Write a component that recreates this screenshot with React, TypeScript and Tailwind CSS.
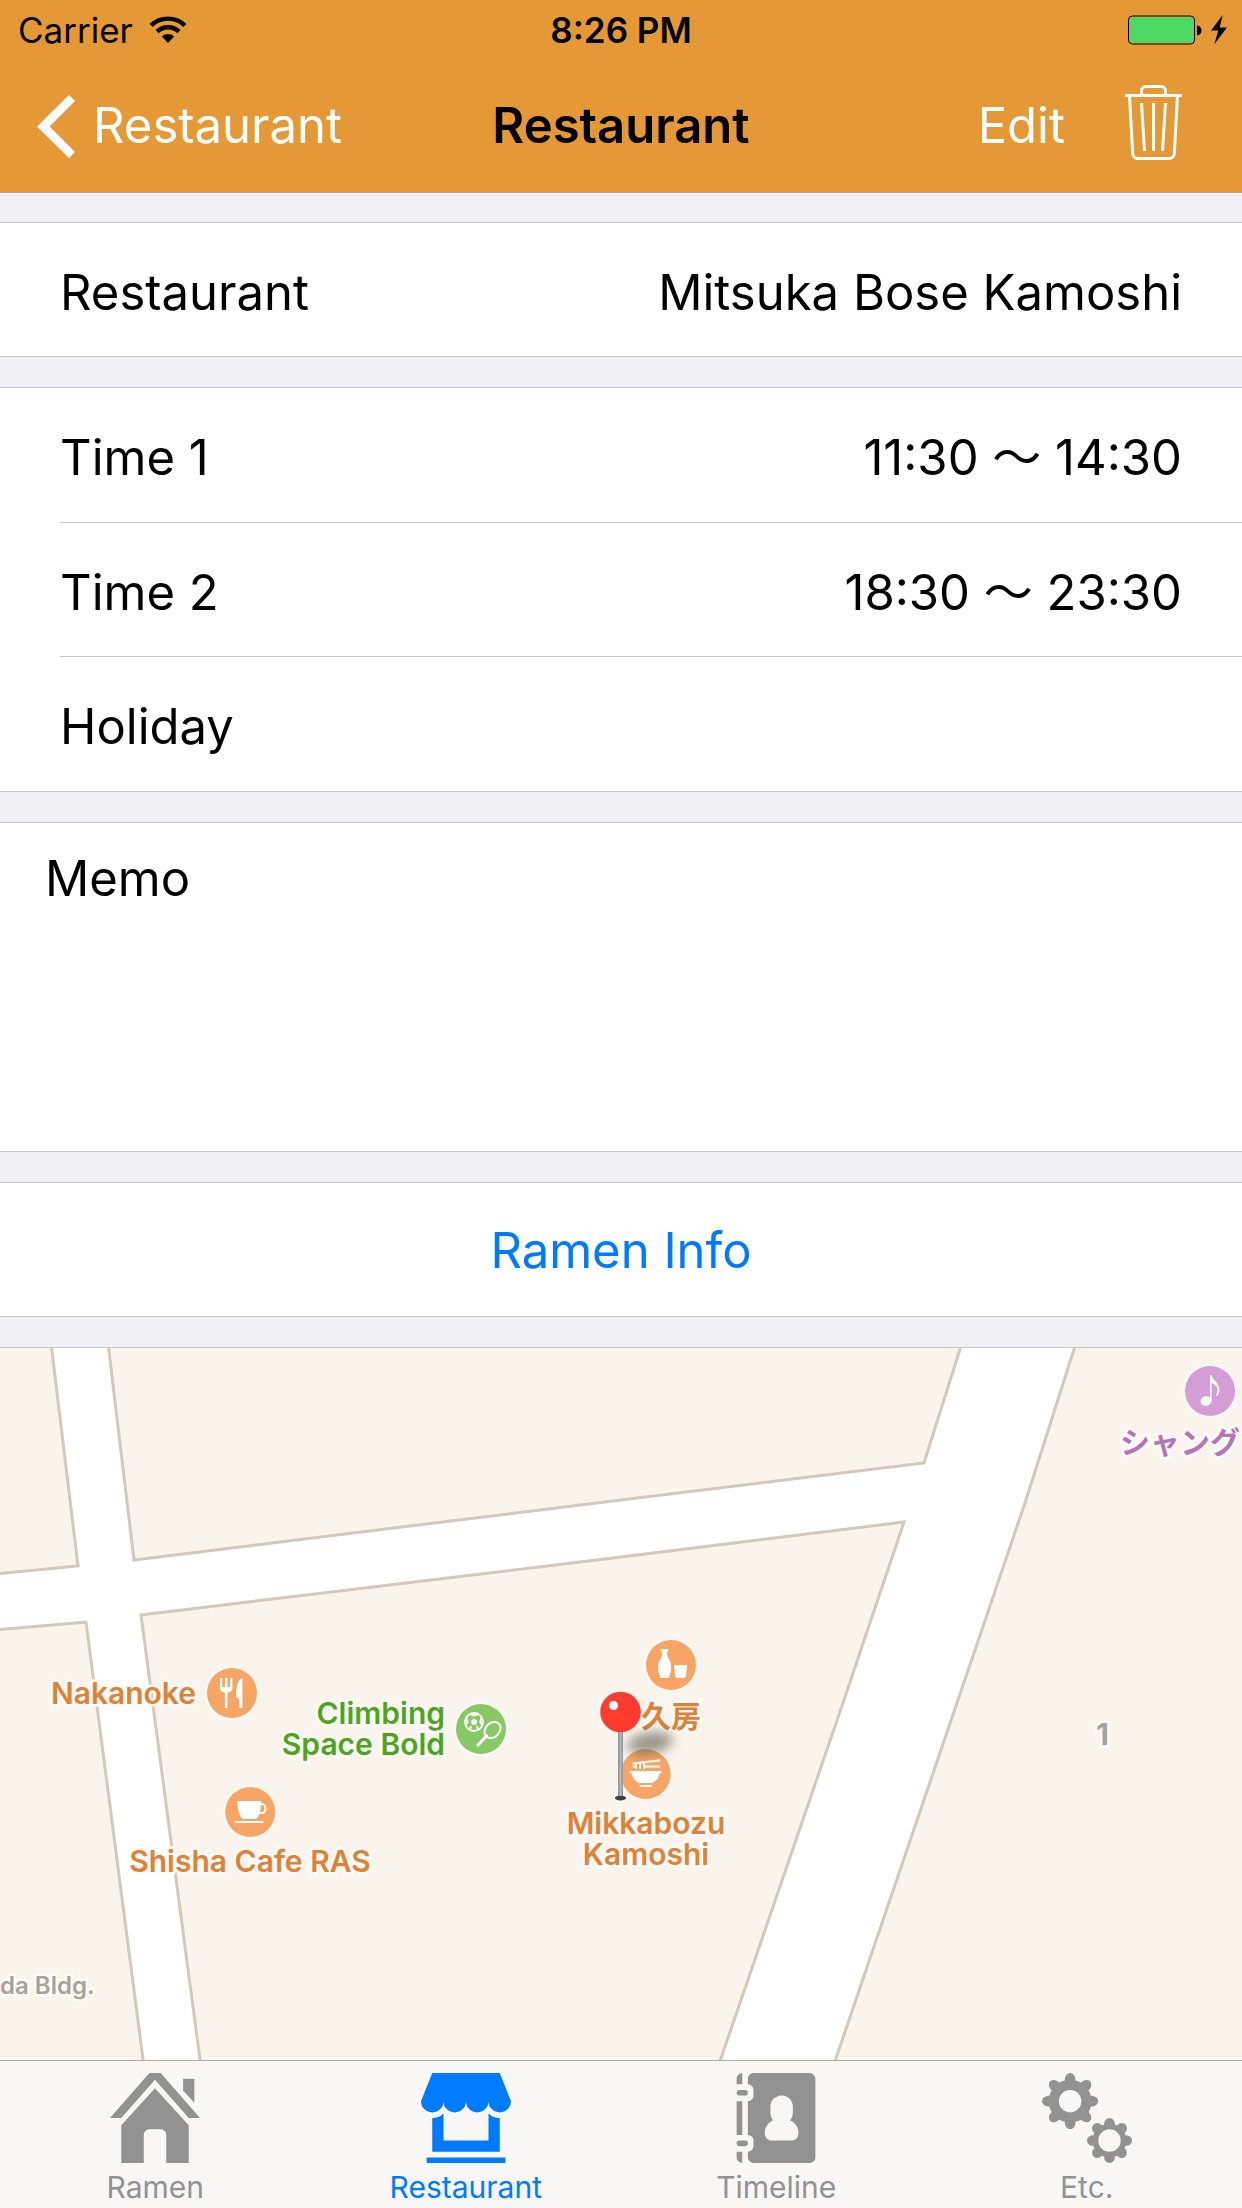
import type { ReactNode } from 'react'

type Row = { label: string; value?: string }

const nameRows: Row[] = [{ label: 'Restaurant', value: 'Mitsuka Bose Kamoshi' }]

const timeRows: Row[] = [
  { label: 'Time 1', value: '11:30 〜 14:30' },
  { label: 'Time 2', value: '18:30 〜 23:30' },
  { label: 'Holiday' },
]

function WifiIcon() {
  return (
    <svg viewBox="0 0 38 28" className="h-7 w-[38px]" fill="none" stroke="currentColor" aria-hidden="true">
      <path d="M2.1 9.5a24.3 24.3 0 0 1 33.8 0" strokeWidth="4.4" />
      <path d="M8.1 15.7a15.7 15.7 0 0 1 21.8 0" strokeWidth="4.6" />
      <path d="M19 27l-6.2-6.5a9 9 0 0 1 12.4 0z" fill="currentColor" stroke="none" />
    </svg>
  )
}

function BatteryIcon() {
  return (
    <svg viewBox="0 0 100 30" className="h-[30px] w-[100px]" aria-hidden="true">
      <rect x="0.5" y="1" width="66" height="28" rx="4" fill="none" stroke="#000" />
      <rect x="1.6" y="2.2" width="63.8" height="25.6" rx="3" fill="#4cd964" />
      <path d="M69 10.5a4.5 5 0 0 1 0 10z" fill="#000" />
      <path d="M94.7 0L83 15.6h7.3L86.3 29.3 99 12.6h-7.3z" fill="#000" />
    </svg>
  )
}

function BackIcon() {
  return (
    <svg viewBox="0 0 38 63" className="h-[63px] w-[38px]" fill="currentColor" aria-hidden="true">
      <path d="M32 0l6 6-25.5 25.5L38 57l-6 6L0 31.5z" />
    </svg>
  )
}

function TrashIcon() {
  return (
    <svg viewBox="0 0 57 75" className="h-[75px] w-[57px]" fill="none" stroke="currentColor" strokeWidth="3" aria-hidden="true">
      <path d="M0 10.5h57" />
      <path d="M16.5 10V6a4.5 4.5 0 0 1 4.5-4.5h15A4.5 4.5 0 0 1 40.5 6v4" />
      <path d="M4.5 11l3.2 57.5a5 5 0 0 0 5 5h31.6a5 5 0 0 0 5-5L52.5 11" />
      <path d="M16.5 18l3 48M28.5 18v48M40.5 18l-3 48" />
    </svg>
  )
}

function Header() {
  return (
    <header className="relative bg-[#e59936] shadow-[0_1px_0_#a7a6a9]">
      <div className="grid h-[60px] grid-cols-[1fr_auto_1fr] items-center text-[35px]">
        <div className="flex items-center gap-4 pl-[18px]">
          <span>Carrier</span>
          <WifiIcon />
        </div>
        <span className="font-semibold">8:26 PM</span>
        <div className="flex justify-end pr-[14px]">
          <BatteryIcon />
        </div>
      </div>
      <nav className="grid h-[132px] grid-cols-[1fr_auto_1fr] items-center">
        <button type="button" className="flex items-center gap-[18px] pl-[37px] text-white">
          <BackIcon />
          Restaurant
        </button>
        <h1 className="font-semibold">Restaurant</h1>
        <div className="flex items-center justify-end gap-[60px] pr-[60px] text-white">
          <button type="button">Edit</button>
          <button type="button" aria-label="Delete restaurant" className="-mt-2">
            <TrashIcon />
          </button>
        </div>
      </nav>
    </header>
  )
}

function RowGroup({ rows, className }: { rows: Row[]; className: string }) {
  return (
    <dl className={`flex flex-col border-y border-[#c8c7cc] bg-white ${className}`}>
      {rows.map((row) => (
        <div
          key={row.label}
          className="ml-[60px] flex flex-1 items-center justify-between border-b border-[#c8c7cc] pt-1.5 pr-[60px] last:border-b-0"
        >
          <dt>{row.label}</dt>
          <dd>{row.value}</dd>
        </div>
      ))}
    </dl>
  )
}

/* ---------- Map ---------- */

function Roads() {
  return (
    <svg viewBox="0 0 1242 712" className="h-[712px] w-[1242px]" aria-hidden="true">
      <rect width="1242" height="712" fill="#fff" />
      <g fill="#f9f5ed" stroke="#d2c8bc" strokeWidth="3">
        <path d="M-5 226L78 218 51-5H-5z" />
        <path d="M108-5l26 217 487-60 303-37 38-120z" />
        <path d="M-5 282L86 274l58 445H-5z" />
        <path d="M141 267l480-58 283-35-60 178-126 367H201z" />
        <path d="M1076-5l-51 160-67 197-125 367h415V-5z" />
      </g>
    </svg>
  )
}

function ForkKnife() {
  return (
    <g fill="#fff">
      <path d="M13 10h2.2v9h2.7v-9h2.5v9h2.7v-9h2.3v10.5c0 2-1.7 3.5-5 4.3V40h-2.5V24.8c-3.2-.8-4.9-2.3-4.9-4.3z" />
      <path d="M35.4 10v30h-3.2v-9l-2.7-1.2c-1-8 .3-17.8 5.9-19.8z" />
    </g>
  )
}

function TeaCup() {
  return (
    <g fill="#fff">
      <path d="M12.2 14H36c0 8-1.5 14-5 18H17.5c-3.8-4-5.3-10-5.3-18z" />
      <path d="M35 17h2a3.2 4.5 0 0 1 0 9h-3.5" fill="none" stroke="#fff" strokeWidth="2" />
      <path d="M9 34h30l-1.5 2h-27z" />
    </g>
  )
}

function SportsGear() {
  return (
    <g fill="none" stroke="#fff">
      <circle cx="18" cy="18" r="9" strokeWidth="1.8" />
      <path d="M18 14.5l3.3 2.4-1.3 3.9h-4l-1.3-3.9z" fill="#fff" stroke="none" />
      <path d="M14 10l4 1.5 4-1.5M25.5 14l-1.2 4 2 3M22 25.5l-1-3.5M14 25.5l1-3.5M10.5 14l1.2 4-2 3" strokeWidth="2" />
      <ellipse cx="36.5" cy="26" rx="9" ry="7" strokeWidth="2" transform="rotate(-45 36.5 26)" />
      <path d="M30.5 32L22 41" strokeWidth="3.2" strokeLinecap="round" />
    </g>
  )
}

function Sake() {
  return (
    <g fill="#fff">
      <path d="M14.3 9h8.4l-1.5 3.5v3c1 3 4 6 4 11.5 0 4-.7 7-1.7 9l-.5 2h-8.5l-.7-2c-1-2-1.7-5-1.7-9 0-5.500 3-8.500 4-11.500v-3z" />
      <path d="M28 25h13l-1 11-1.2 2h-8.600L29 36z" />
    </g>
  )
}

function NoodleBowl() {
  return (
    <g fill="none" stroke="#fff">
      <path d="M12 14.5l27.5-3.2M24 17.5h15.5M12 17.5h2.5" strokeWidth="2.2" />
      <path d="M15.5 14v6M19.5 14v6M23.5 13v7" strokeWidth="1.6" />
      <path d="M9 22h32v2h-1.7c-.8 4.5-3.6 8-7.3 10H18c-3.7-2-6.5-5.5-7.3-10H9z" fill="#fff" stroke="none" />
      <path d="M19 37h12" strokeWidth="2" />
    </g>
  )
}

function Note() {
  return (
    <g fill="#fff">
      <ellipse cx="21" cy="35" rx="5.5" ry="4.8" transform="rotate(-15 21 35)" />
      <path d="M25 9h1.5c1 5 8 8 8 15 0 2.5-1.2 5-3 6l-.6-.8c4-5.500 1.100-10.200-4.400-12.200V35H25z" />
    </g>
  )
}

function Badge({ color, children }: { color: string; children: ReactNode }) {
  return (
    <svg viewBox="-3 -3 56 56" className="size-14 shrink-0" aria-hidden="true">
      <circle cx="25" cy="25" r="27" fill="#fcfaf6" />
      <circle cx="25" cy="25" r="25" fill={color} />
      {children}
    </svg>
  )
}

const halo = 'whitespace-nowrap [-webkit-text-stroke:5px_#fdfbf7] [paint-order:stroke_fill]'

function Pin() {
  return (
    <svg viewBox="0 0 120 140" className="absolute top-[340px] left-[590px] h-[140px] w-[120px]" role="img" aria-label="Mitsuka Bose Kamoshi">
      <defs>
        <filter id="pin-blur" x="-50%" y="-100%" width="200%" height="300%">
          <feGaussianBlur stdDeviation="6" />
        </filter>
        <linearGradient id="pin-stem">
          <stop offset="0" stopColor="#85898e" />
          <stop offset="0.5" stopColor="#b4b7bb" />
          <stop offset="1" stopColor="#8f9296" />
        </linearGradient>
      </defs>
      <ellipse cx="60" cy="55" rx="23" ry="11" fill="#5c5a50" opacity="0.6" filter="url(#pin-blur)" transform="rotate(-10 60 55)" />
      <ellipse cx="30.5" cy="110" rx="5.5" ry="2.5" fill="#3c4043" />
      <path d="M28 40h5v68h-5z" fill="url(#pin-stem)" />
      <circle cx="30.5" cy="24" r="20.3" fill="#ff3b30" />
      <circle cx="23.5" cy="17.5" r="4.5" fill="#fff" />
    </svg>
  )
}

function MapView() {
  return (
    <section aria-label="Map" className="relative min-h-[713px] flex-1 overflow-hidden border-t border-[#c8c7cc] bg-[#f9f5ed]">
      <div className="absolute top-0 left-1/2 h-[712px] w-[1242px] -translate-x-1/2 text-[30px] leading-[31px] font-semibold text-[#df8136]">
        <Roads />
        <div className={`absolute top-[317px] right-[982px] flex items-center gap-2 ${halo}`}>
          Nakanoke
          <Badge color="#f7a564"><ForkKnife /></Badge>
        </div>
        <div className={`absolute top-[350px] right-[733px] flex items-center gap-2 text-right text-[#4ca61d] ${halo}`}>
          <span>Climbing<br />Space Bold</span>
          <Badge color="#87c964"><SportsGear /></Badge>
        </div>
        <div className={`absolute top-[436px] left-[250px] flex -translate-x-1/2 flex-col items-center gap-1.5 ${halo}`}>
          <Badge color="#f7a564"><TeaCup /></Badge>
          Shisha Cafe RAS
        </div>
        <div className={`absolute top-[289px] left-[671px] flex -translate-x-1/2 flex-col items-center gap-2 ${halo}`}>
          <Badge color="#f7a564"><Sake /></Badge>
          <span lang="ja">久房</span>
        </div>
        <div className={`absolute top-[398px] left-[646px] flex -translate-x-1/2 flex-col items-center gap-1.5 text-center ${halo}`}>
          <Badge color="#f7a564"><NoodleBowl /></Badge>
          <span>Mikkabozu<br />Kamoshi</span>
        </div>
        <div className={`absolute top-[15px] left-[1120px] flex w-[180px] flex-col gap-2 text-[#b573b8] ${halo}`}>
          <div className="flex justify-center"><Badge color="#d49dd6"><Note /></Badge></div>
          <span lang="ja">シャング</span>
        </div>
        <span className={`absolute top-[371px] left-[1096px] font-bold text-[#a5a39f] ${halo}`}>1</span>
        <span className={`absolute top-[622px] left-0 text-[24px] text-[#a8a29a] ${halo}`}>da Bldg.</span>
        <Pin />
      </div>
    </section>
  )
}

/* ---------- Tab bar ---------- */

function HomeIcon() {
  return (
    <>
      <path d="M7 0h2l7 8h-2L8 1.2 2 8H0z" />
      <path d="M13 1h2v4.3l-2-2.2z" />
      <path d="M8 2.7l6 6.6V16h-4v-5a1 1 0 0 0-1-1H7a1 1 0 0 0-1 1v5H2V9.3z" />
    </>
  )
}

function ShopIcon() {
  return (
    <>
      <path d="M2 0h12l2 5a2 2 0 0 1-4 0 2 2 0 0 1-4 0 2 2 0 0 1-4 0 2 2 0 0 1-4 0z" />
      <path d="M2 8q1.2 0 2-.8V12h8V7.2q.8.8 2 .8v6H2z" />
      <path d="M1 15h14v1H1z" />
    </>
  )
}

function BookIcon() {
  return (
    <>
      <path d="M2 0v2H1V1a1 1 0 0 1 1-1zM1 5h1v6H1zM1 14h1v2a1 1 0 0 1-1-1z" />
      <rect x="1" y="3" width="2" height="1" rx="0.5" />
      <rect x="1" y="12" width="2" height="1" rx="0.5" />
      <path
        fillRule="evenodd"
        d="M4 0h10a1 1 0 0 1 1 1v14a1 1 0 0 1-1 1H4a1 1 0 0 1-1-1v-1a1 1 0 0 0 1-1v-1a1 1 0 0 0-1-1V5a1 1 0 0 0 1-1V3a1 1 0 0 0-1-1V1a1 1 0 0 1 1-1zM9 4c-1.2 0-2 .9-2 2v1c0 .6.2 1 .5 1.4C6.6 8.8 6 9.7 6 10.6 6 11.4 6.5 12 7.3 12h3.4c.8 0 1.3-.6 1.3-1.4 0-.9-.6-1.8-1.5-2.2.3-.4.5-.8.5-1.4V6c0-1.1-.8-2-2-2z"
      />
    </>
  )
}

const teeth = [0, 45, 90, 135, 180, 225, 270, 315]

function GearsIcon() {
  return (
    <>
      <circle cx="5" cy="5" r="2.9" fill="none" stroke="currentColor" strokeWidth="1.8" />
      {teeth.map((a) => (
        <ellipse key={a} cx="5" cy="1.2" rx="0.95" ry="1.2" transform={`rotate(${a} 5 5)`} />
      ))}
      <circle cx="12" cy="12" r="2.5" fill="none" stroke="currentColor" strokeWidth="1" />
      {teeth.map((a) => (
        <ellipse key={a} cx="12" cy="9" rx="0.95" ry="1" transform={`rotate(${a} 12 12)`} />
      ))}
    </>
  )
}

const tabs = [
  { label: 'Ramen', icon: <HomeIcon /> },
  { label: 'Restaurant', icon: <ShopIcon />, active: true },
  { label: 'Timeline', icon: <BookIcon /> },
  { label: 'Etc.', icon: <GearsIcon /> },
]

function TabBar() {
  return (
    <nav className="grid h-[148px] grid-cols-4 border-t border-[#b2aca3] bg-[#f8f7f5] pt-3 text-[30px] leading-9">
      {tabs.map((tab) => (
        <button
          key={tab.label}
          type="button"
          aria-current={tab.active ? 'page' : undefined}
          className={`flex flex-col items-center gap-1.5 ${tab.active ? 'text-[#007aff]' : 'text-[#929292]'}`}
        >
          <svg viewBox="0 0 16 16" className="size-[90px]" fill="currentColor" aria-hidden="true">
            {tab.icon}
          </svg>
          {tab.label}
        </button>
      ))}
    </nav>
  )
}

export default function App() {
  return (
    <div className="flex min-h-screen flex-col bg-[#efeff4] font-[Inter,'Noto_Sans_CJK_JP',sans-serif] text-[49px] leading-[60px] text-black">
      <Header />
      <main className="flex flex-1 flex-col gap-[30px] pt-[30px]">
        <RowGroup rows={nameRows} className="min-h-[135px]" />
        <RowGroup rows={timeRows} className="min-h-[405px]" />
        <textarea
          aria-label="Memo"
          defaultValue="Memo"
          className="block h-[330px] w-full resize-none border-y border-[#c8c7cc] bg-white px-[45px] py-[26px] outline-none"
        />
        <button type="button" className="min-h-[135px] border-y border-[#c8c7cc] bg-white pt-0.5 text-[#007aff]">
          Ramen Info
        </button>
        <MapView />
      </main>
      <TabBar />
    </div>
  )
}
